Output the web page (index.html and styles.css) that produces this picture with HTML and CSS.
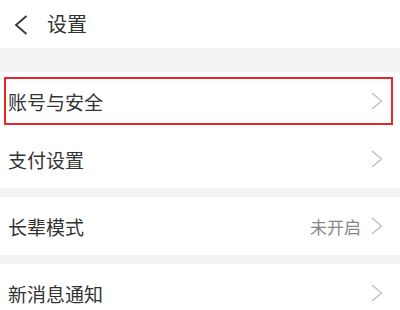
FILE: index.html
```html
<!DOCTYPE html>
<html lang="zh-CN">
<head>
    <meta charset="UTF-8">
    <title>设置</title>
    <link rel="stylesheet" href="styles.css">
</head>
<body>
    <div class="page">
        <!-- Top bar -->
        <div class="top-bar">
            <svg class="back-icon" width="14" height="20" viewBox="0 0 14 20">
                <polyline points="12.5,1 2,10 12.5,19" fill="none" stroke="#333" stroke-width="1.8"/>
            </svg>
            <span class="title">设置</span>
        </div>

        <div class="gap gap-big"></div>

        <div class="group">
            <div class="row">
                <span class="row-label">账号与安全</span>
                <span class="row-right">
                    <svg class="arrow" width="12" height="18" viewBox="0 0 12 18"><polyline points="1,1 10.5,9 1,17" fill="none" stroke="#bdbdbd" stroke-width="1.3"/></svg>
                </span>
            </div>
            <div class="row">
                <span class="row-label">支付设置</span>
                <span class="row-right">
                    <svg class="arrow" width="12" height="18" viewBox="0 0 12 18"><polyline points="1,1 10.5,9 1,17" fill="none" stroke="#bdbdbd" stroke-width="1.3"/></svg>
                </span>
            </div>
            <!-- annotation box -->
            <div class="highlight"></div>
        </div>

        <div class="gap"></div>

        <div class="group">
            <div class="row">
                <span class="row-label">长辈模式</span>
                <span class="row-right">
                    <span class="row-value">未开启</span>
                    <svg class="arrow" width="12" height="18" viewBox="0 0 12 18"><polyline points="1,1 10.5,9 1,17" fill="none" stroke="#bdbdbd" stroke-width="1.3"/></svg>
                </span>
            </div>
        </div>

        <div class="gap"></div>

        <div class="group">
            <div class="row">
                <span class="row-label">新消息通知</span>
                <span class="row-right">
                    <svg class="arrow" width="12" height="18" viewBox="0 0 12 18"><polyline points="1,1 10.5,9 1,17" fill="none" stroke="#bdbdbd" stroke-width="1.3"/></svg>
                </span>
            </div>
        </div>
    </div>
</body>
</html>
```

FILE: styles.css
```css
body {
    margin: 0;
    font-family: "Noto Sans CJK SC", "Noto Sans", sans-serif;
    background-color: #fff;
    color: #333;
}

.page {
    width: 400px;
    height: 310px;
    overflow: hidden;
}

.top-bar {
    height: 48px;
    display: flex;
    align-items: center;
    background-color: #fff;
}

.back-icon {
    margin-left: 14px;
    margin-top: 1px;
}

.title {
    margin-left: 19px;
    font-size: 20px;
    line-height: 1;
    color: #333;
}

.gap {
    height: 9px;
    background-color: #f3f3f3;
}

.gap-big {
    height: 24px;
}

.group {
    position: relative;
    background-color: #fff;
}

.row {
    height: 58px;
    display: flex;
    align-items: center;
    justify-content: space-between;
    padding: 0 17px 0 8px;
}

.row-label {
    font-size: 19px;
    line-height: 1;
    color: #333;
}

.row-right {
    display: flex;
    align-items: center;
}

.row-value {
    font-size: 17px;
    line-height: 1;
    color: #888;
    margin-right: 10px;
}

.arrow {
    display: block;
}

.highlight {
    position: absolute;
    left: 4px;
    top: 5px;
    width: 385px;
    height: 44px;
    border: 2px solid #e8252b;
}
```
